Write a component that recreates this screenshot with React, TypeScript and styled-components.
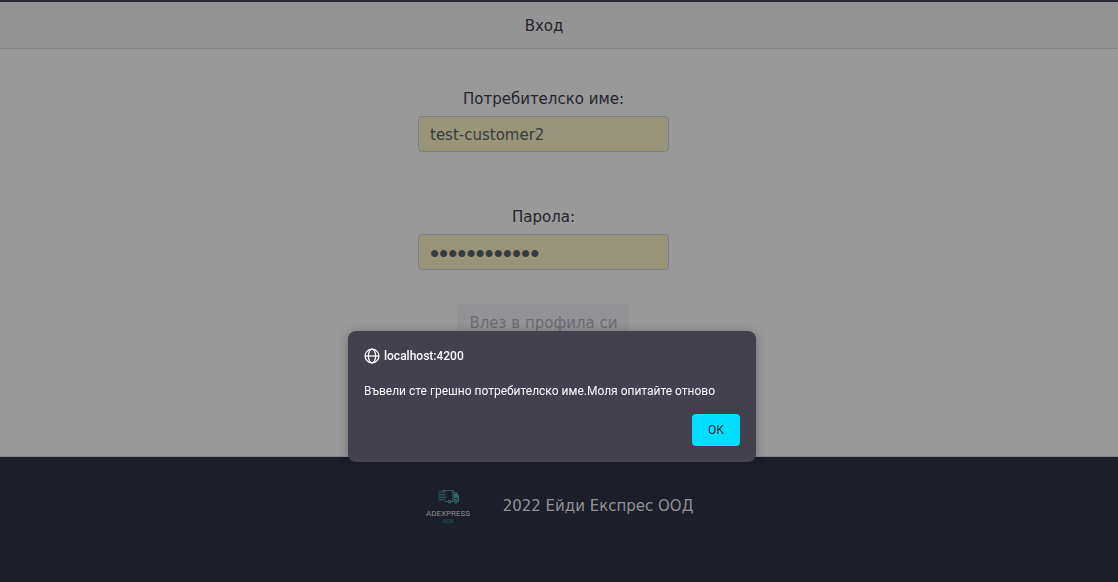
import React, { useState } from 'react';
import styled, { createGlobalStyle } from 'styled-components';

const GlobalStyle = createGlobalStyle`
  *, *::before, *::after { box-sizing: border-box; }
  body {
    margin: 0;
    background: #99999a;
    color: #24242c;
    font-family: Verdana, "DejaVu Sans", sans-serif;
    font-size: 15px;
    line-height: 24px;
  }
`;

const Page = styled.div`
  display: flex;
  flex-direction: column;
  min-height: 100vh;
  border-top: 2px solid #2b2a33;
`;

const Header = styled.header`
  padding: 12px 30px 10px 0;
  background: #949495;
  border-bottom: 1px solid #828388;
  text-align: center;
`;

const Title = styled.h1`
  margin: 0;
  font-size: 15px;
  font-weight: 400;
`;

const Form = styled.form`
  flex: 1;
  display: flex;
  flex-direction: column;
  align-items: center;
  padding: 38px 31px 0 0;
`;

const Field = styled.div`
  display: flex;
  flex-direction: column;
  align-items: center;
  gap: 5px;
  margin-bottom: 53px;

  &:last-of-type { margin-bottom: 34px; }
`;

const Input = styled.input`
  width: 251px;
  height: 36px;
  padding: 7px 11px 5px;
  border: 1px solid #7c7f88;
  border-radius: 4px;
  background: #99957a;
  color: #363b42;
  font: inherit;

  &[type='password'] {
    font-family: "Liberation Sans", Arial, sans-serif;
    font-size: 26px;
  }
`;

const Submit = styled.button`
  height: 38px;
  padding: 6px 12px;
  border: 0;
  border-radius: 4px;
  background: #939297;
  color: #6c6b70;
  font: inherit;
`;

const Footer = styled.footer`
  display: flex;
  justify-content: center;
  align-items: flex-start;
  gap: 32px;
  height: 126px;
  padding: 30px 0 0;
  border-top: 1px solid #86878b;
  background: #1c1e29;
  color: #929397;
`;

const Copyright = styled.p`
  margin: 7px 0 0;
`;

const DialogLayer = styled.div`
  position: fixed;
  inset: 0;
  display: flex;
  justify-content: center;
  align-items: center;
  padding: 211px 14px 0 0;
`;

const Dialog = styled.div`
  width: 408px;
  padding: 17px 16px 16px;
  border-radius: 8px;
  background: #42414d;
  color: #fbfbfe;
  box-shadow: 0 2px 10px rgba(20, 20, 30, 0.35);
  font-family: "Segoe UI", Roboto, sans-serif;
  font-size: 12px;
  line-height: 16px;
`;

const Origin = styled.h2`
  display: flex;
  align-items: center;
  gap: 4px;
  margin: 0 0 19px;
  font-size: 12px;
  font-weight: 500;
`;

const Message = styled.p`
  margin: 0 0 15px;
`;

const Actions = styled.div`
  display: flex;
  justify-content: flex-end;
`;

const OkButton = styled.button`
  min-width: 48px;
  height: 32px;
  padding: 0 12px;
  border: 0;
  border-radius: 4px;
  background: #00ddff;
  color: #2b2a33;
  font: inherit;
`;

const GlobeIcon = () => (
  <svg width="16" height="16" viewBox="0 0 16 16" fill="none" stroke="currentColor" strokeWidth="1.3" aria-hidden="true">
    <circle cx="8" cy="8" r="6.9" />
    <ellipse cx="8" cy="8" rx="3.6" ry="6.9" />
    <path d="M1.2 8h13.6" />
  </svg>
);

const Logo = () => (
  <svg width="46" height="38" viewBox="0 0 46 38" role="img" aria-label="ADEXPRESS ADX">
    <g fill="none" stroke="#356b70" strokeWidth="1.1">
      <path d="M18 3.5h3M22 3.5h2.4M25.4 3.5h2.6v10.5M13.6 5h7M13.6 7.7h7M13.6 10.2h8M13.6 12.7h6.4M20 14.5h3M26 14.5h2.5M28 5.8h3.6l1.9 3.4v5h-1.2" />
      <path d="M29.5 7.4h2l1.4 3h-3.4zM29 12.5h4" fill="#356b70" />
      <circle cx="24.4" cy="14.7" r="1.2" />
      <circle cx="30.8" cy="14.7" r="1.2" />
    </g>
    <text x="23" y="29" textAnchor="middle" fontFamily="Roboto, sans-serif" fontSize="8" fill="#8c8d93">ADEXPRESS</text>
    <text x="23" y="36" textAnchor="middle" fontFamily="Roboto, sans-serif" fontSize="6" fill="#2c555c">ADX</text>
  </svg>
);

export default function App() {
  const [user, setUser] = useState('test-customer2');
  const [password, setPassword] = useState('customer1234');
  const [open, setOpen] = useState(true);

  return (
    <>
      <GlobalStyle />
      <Page>
        <Header><Title>Вход</Title></Header>
        <Form onSubmit={(e) => e.preventDefault()}>
          <Field>
            <label htmlFor="username">Потребителско име:</label>
            <Input id="username" value={user} onChange={(e) => setUser(e.target.value)} />
          </Field>
          <Field>
            <label htmlFor="password">Парола:</label>
            <Input id="password" type="password" value={password} onChange={(e) => setPassword(e.target.value)} />
          </Field>
          <Submit type="submit">Влез в профила си</Submit>
        </Form>
        <Footer>
          <Logo />
          <Copyright>2022 Ейди Експрес ООД</Copyright>
        </Footer>
      </Page>
      {open && (
        <DialogLayer>
          <Dialog role="alertdialog" aria-modal="true" aria-labelledby="origin" aria-describedby="message">
            <Origin id="origin"><GlobeIcon />localhost:4200</Origin>
            <Message id="message">Въвели сте грешно потребителско име.Моля опитайте отново</Message>
            <Actions><OkButton type="button" onClick={() => setOpen(false)}>OK</OkButton></Actions>
          </Dialog>
        </DialogLayer>
      )}
    </>
  );
}
